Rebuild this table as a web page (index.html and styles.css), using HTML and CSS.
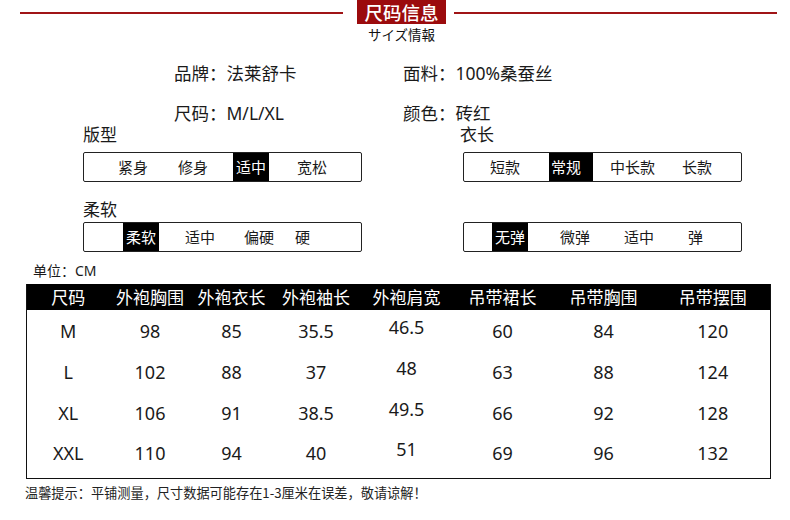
FILE: index.html
```html
<!DOCTYPE html>
<html lang="zh-CN">
<head>
<meta charset="utf-8">
<title>尺码信息</title>
<link rel="stylesheet" href="styles.css">
</head>
<body>
<header class="title">
  <div class="rule"></div>
  <div class="badge">
    <div class="badge-main">尺码信息</div>
    <div class="badge-sub">サイズ情報</div>
  </div>
  <div class="rule rule-right"></div>
</header>

<section class="info">
  <div>品牌<span class="colon">：</span>法莱舒卡</div>
  <div>面料<span class="colon">：</span>100%桑蚕丝</div>
  <div>尺码<span class="colon">：</span>M/L/XL</div>
  <div>颜色<span class="colon">：</span>砖红</div>
</section>

<section class="options">
  <div class="label">版型</div>
  <div class="label label-right">衣长</div>
  <div class="scale scale-fit">
    <span class="opt">紧身</span><span class="opt">修身</span><span class="opt on">适中</span><span class="opt">宽松</span>
  </div>
  <div class="scale scale-len">
    <span class="opt">短款</span><span class="opt on on-wide">常规</span><span class="opt">中长款</span><span class="opt">长款</span>
  </div>
  <div class="label label-soft">柔软</div>
  <div class="label label-soft"></div>
  <div class="scale scale-soft">
    <span class="opt on">柔软</span><span class="opt">适中</span><span class="opt">偏硬</span><span class="opt">硬</span>
  </div>
  <div class="scale scale-elastic">
    <span class="opt on">无弹</span><span class="opt">微弹</span><span class="opt">适中</span><span class="opt">弹</span>
  </div>
</section>

<div class="unit">单位<span class="colon">：</span>CM</div>

<table class="sizes">
  <colgroup>
    <col class="c1"><col class="c2"><col class="c3"><col class="c4"><col class="c5"><col class="c6"><col class="c7"><col class="c8">
  </colgroup>
  <thead>
    <tr><th>尺码</th><th>外袍胸围</th><th>外袍衣长</th><th>外袍袖长</th><th>外袍肩宽</th><th>吊带裙长</th><th>吊带胸围</th><th>吊带摆围</th></tr>
  </thead>
  <tbody>
    <tr><td>M</td><td>98</td><td>85</td><td>35.5</td><td class="up">46.5</td><td>60</td><td>84</td><td>120</td></tr>
    <tr><td>L</td><td>102</td><td>88</td><td>37</td><td class="up">48</td><td>63</td><td>88</td><td>124</td></tr>
    <tr><td>XL</td><td>106</td><td>91</td><td>38.5</td><td class="up">49.5</td><td>66</td><td>92</td><td>128</td></tr>
    <tr class="last"><td>XXL</td><td>110</td><td>94</td><td>40</td><td class="up">51</td><td>69</td><td>96</td><td>132</td></tr>
  </tbody>
</table>

<p class="note">温馨提示<span class="colon">：</span>平铺测量，尺寸数据可能存在1-3厘米在误差，敬请谅解！</p>
</body>
</html>
```

FILE: styles.css
```css
* { box-sizing: border-box; }

body {
  margin: 0;
  width: 790px;
  background: #fff;
  color: #1a1a1a;
  font-family: "Noto Sans", "Noto Sans CJK SC", sans-serif;
}

.colon {
  font-family: "Noto Sans CJK JP", sans-serif;
}

/* title */
.title {
  display: flex;
  align-items: flex-start;
  padding: 0 13px 0 20px;
  height: 42px;
}
.rule {
  flex: 1;
  height: 2px;
  margin-top: 12px;
  background: #a01416;
}
.badge {
  width: 89px;
  margin: 0 8px 0 14px;
  text-align: center;
}
.badge-main {
  height: 24px;
  line-height: 24px;
  background: #9b0b0d;
  color: #fff;
  font-size: 18.5px;
  font-weight: 500;
  font-family: "Noto Sans CJK SC", sans-serif;
}
.badge-sub {
  margin-top: 2px;
  font-size: 13.5px;
  line-height: 16px;
  color: #111;
  font-family: "Noto Sans CJK JP", sans-serif;
}

/* info */
.info {
  display: grid;
  grid-template-columns: 229px auto;
  row-gap: 16px;
  padding-left: 174px;
  margin-top: 19px;
  font-size: 17.5px;
  line-height: 24px;
  color: #1a1a1a;
}

/* option scales */
.options {
  display: grid;
  grid-template-columns: 279px 279px;
  column-gap: 101px;
  padding-left: 83px;
}
.label {
  font-size: 17px;
  line-height: 20px;
  height: 20px;
  margin-bottom: 7px;
}
.label-right { margin-left: -3px; }
.label-soft { margin-bottom: 2px; }

.scale {
  display: flex;
  align-items: stretch;
  height: 30px;
  border: 1px solid #222;
  border-radius: 2px;
  font-size: 15px;
  line-height: 28px;
  margin-bottom: 18px;
}
.opt {
  display: block;
  white-space: nowrap;
}
.on {
  width: 36px;
  background: #000;
  color: #fff;
  text-align: center;
}
.on-wide {
  width: 44px;
  text-align: left;
  padding-left: 2px;
}

.scale-fit { padding-left: 34px; }
.scale-fit .opt:nth-child(2) { margin-left: 30px; }
.scale-fit .opt:nth-child(3) { margin-left: 25px; }
.scale-fit .opt:nth-child(4) { margin-left: 28px; }

.scale-len { padding-left: 26px; }
.scale-len .opt:nth-child(2) { margin-left: 29px; }
.scale-len .opt:nth-child(3) { margin-left: 17px; }
.scale-len .opt:nth-child(4) { margin-left: 27px; }

.scale-soft { padding-left: 39px; }
.scale-soft .opt:nth-child(2) { margin-left: 26px; }
.scale-soft .opt:nth-child(3) { margin-left: 29px; }
.scale-soft .opt:nth-child(4) { margin-left: 21px; }

.scale-elastic { padding-left: 28px; }
.scale-elastic .opt:nth-child(2) { margin-left: 32px; }
.scale-elastic .opt:nth-child(3) { margin-left: 34px; }
.scale-elastic .opt:nth-child(4) { margin-left: 34px; }

.scale-soft, .scale-elastic { margin-bottom: 0; }

/* unit */
.unit {
  margin-top: 9px;
  padding-left: 33px;
  font-size: 14px;
  line-height: 18px;
}

/* table */
.sizes {
  margin: 4px 0 0 26px;
  width: 744px;
  border-collapse: collapse;
  table-layout: fixed;
  border-left: 1px solid #111;
  border-right: 1px solid #111;
  border-bottom: 1px solid #111;
}
.c1 { width: 83px; }
.c2 { width: 81px; }
.c3 { width: 82px; }
.c4 { width: 87px; }
.c5 { width: 94px; }
.c6 { width: 98px; }
.c7 { width: 104px; }
.c8 { width: 115px; }

.sizes th {
  height: 26px;
  padding: 0;
  background: #000;
  color: #fff;
  font-weight: normal;
  font-size: 17px;
  line-height: 26px;
  font-family: "Noto Sans CJK SC", sans-serif;
  text-align: center;
  white-space: nowrap;
}
.sizes td {
  height: 41px;
  padding: 0;
  text-align: center;
  vertical-align: middle;
  font-size: 18px;
  line-height: 24px;
  color: #1a1a1a;
}
.sizes td.up { padding-bottom: 8px; }
.sizes tr.last td { height: 45px; padding-bottom: 4px; }
.sizes tr.last td.up { padding-bottom: 12px; }

/* note */
.note {
  margin: 6px 0 0 25px;
  font-size: 13.2px;
  line-height: 16px;
  color: #222;
  font-family: "Noto Sans CJK SC", sans-serif;
}
```
